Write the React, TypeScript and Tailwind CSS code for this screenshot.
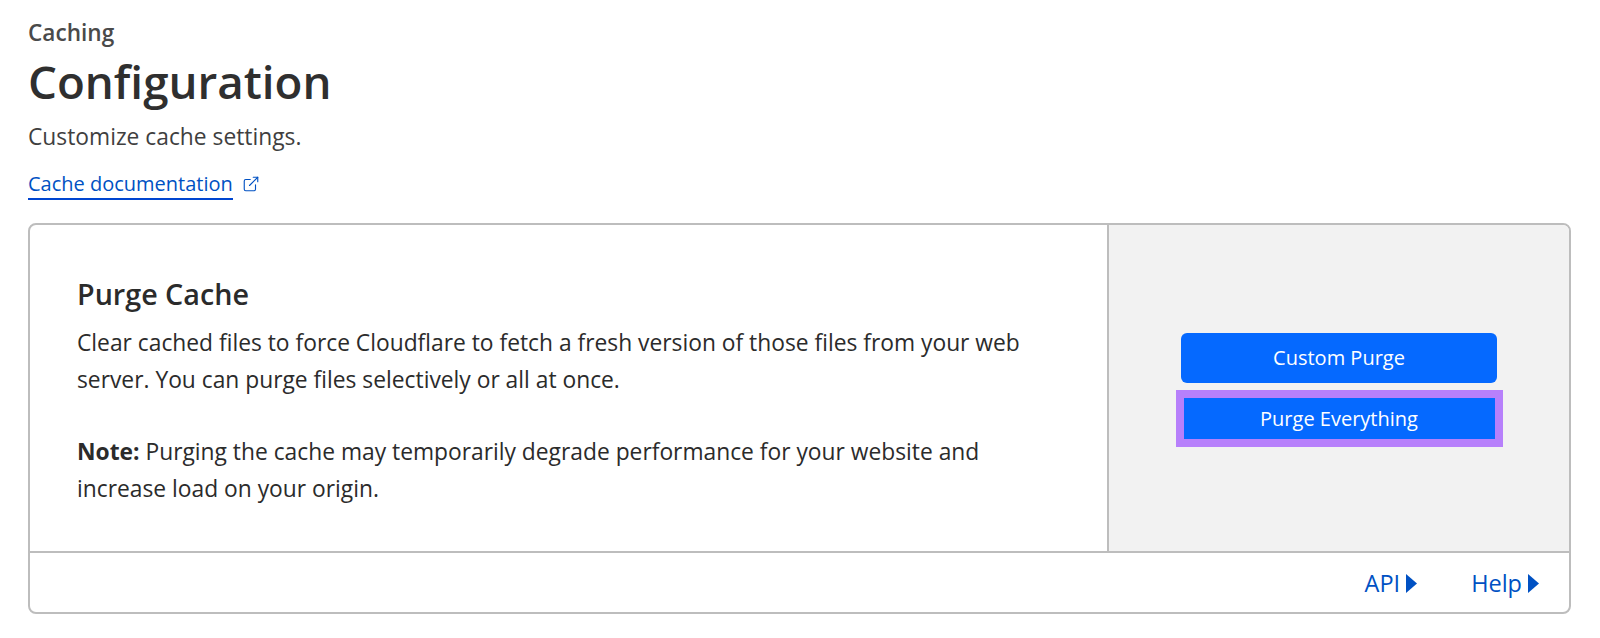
import { ExternalLink } from "lucide-react";

const Arrow = () => (
  <svg width="11" height="19" viewBox="0 0 11 19" className="ml-[6px]">
    <path d="M0 0 L11 9.5 L0 19 Z" fill="#0051c3" />
  </svg>
);

export default function App() {
  return (
    <div className="h-[638px] bg-white pl-[28px] pr-[29px] text-[#36393a] font-['Open_Sans','Noto_Sans',sans-serif]">
      <div className="pt-[19px] text-[22.6px] leading-[28px] font-semibold text-[#4a4a4a]">Caching</div>
      <h1 className="mt-[3px] text-[45.7px] leading-[62px] font-semibold text-[#2f2f2f]">Configuration</h1>
      <p className="mt-[10px] text-[22.8px] leading-[30px] text-[#3f3f3f]">Customize cache settings.</p>
      <div className="mt-[18px] flex items-center h-[30px] text-[20px] text-[#0051c3]">
        <a className="border-b-2 border-[#0045d0] leading-[28px]">Cache documentation</a>
        <ExternalLink className="ml-[9px] mb-[2px]" size={18} strokeWidth={1.5} />
      </div>
      <section className="mt-[23px] h-[391px] flex flex-col rounded-[8px] border-2 border-[#bdbdbd] overflow-hidden">
        <div className="flex h-[328px] border-b-2 border-[#bdbdbd]">
          <div className="w-[1077px] pl-[47px] pt-[50px] pr-[60px] text-[22.8px] leading-[36.5px] text-[#2b2b2b]">
            <h2 className="mb-[12px] text-[28.7px] leading-[38px] font-semibold">Purge Cache</h2>
            <p>Clear cached files to force Cloudflare to fetch a fresh version of those files from your web server. You can purge files selectively or all at once.</p>
            <p className="mt-[36px]"><strong>Note:</strong> Purging the cache may temporarily degrade performance for your website and increase load on your origin.</p>
          </div>
          <div className="flex-1 border-l-2 border-[#bdbdbd] bg-[#f2f2f2] flex flex-col items-center pt-[108px]">
            <button className="w-[316px] h-[50px] rounded-[6px] bg-[#0569ff] text-white text-[20px]">Custom Purge</button>
            <button className="mt-[15px] w-[311px] h-[41px] bg-[#0569ff] text-white text-[20px] outline-[8px] outline-[#b780fb]">Purge Everything</button>
          </div>
        </div>
        <div className="flex-1 flex items-center justify-end pr-[30px] pt-[2px] text-[23.5px] text-[#0051c3]">
          <a className="flex items-center">API<Arrow /></a>
          <a className="flex items-center ml-[54px]">Help<Arrow /></a>
        </div>
      </section>
    </div>
  );
}
